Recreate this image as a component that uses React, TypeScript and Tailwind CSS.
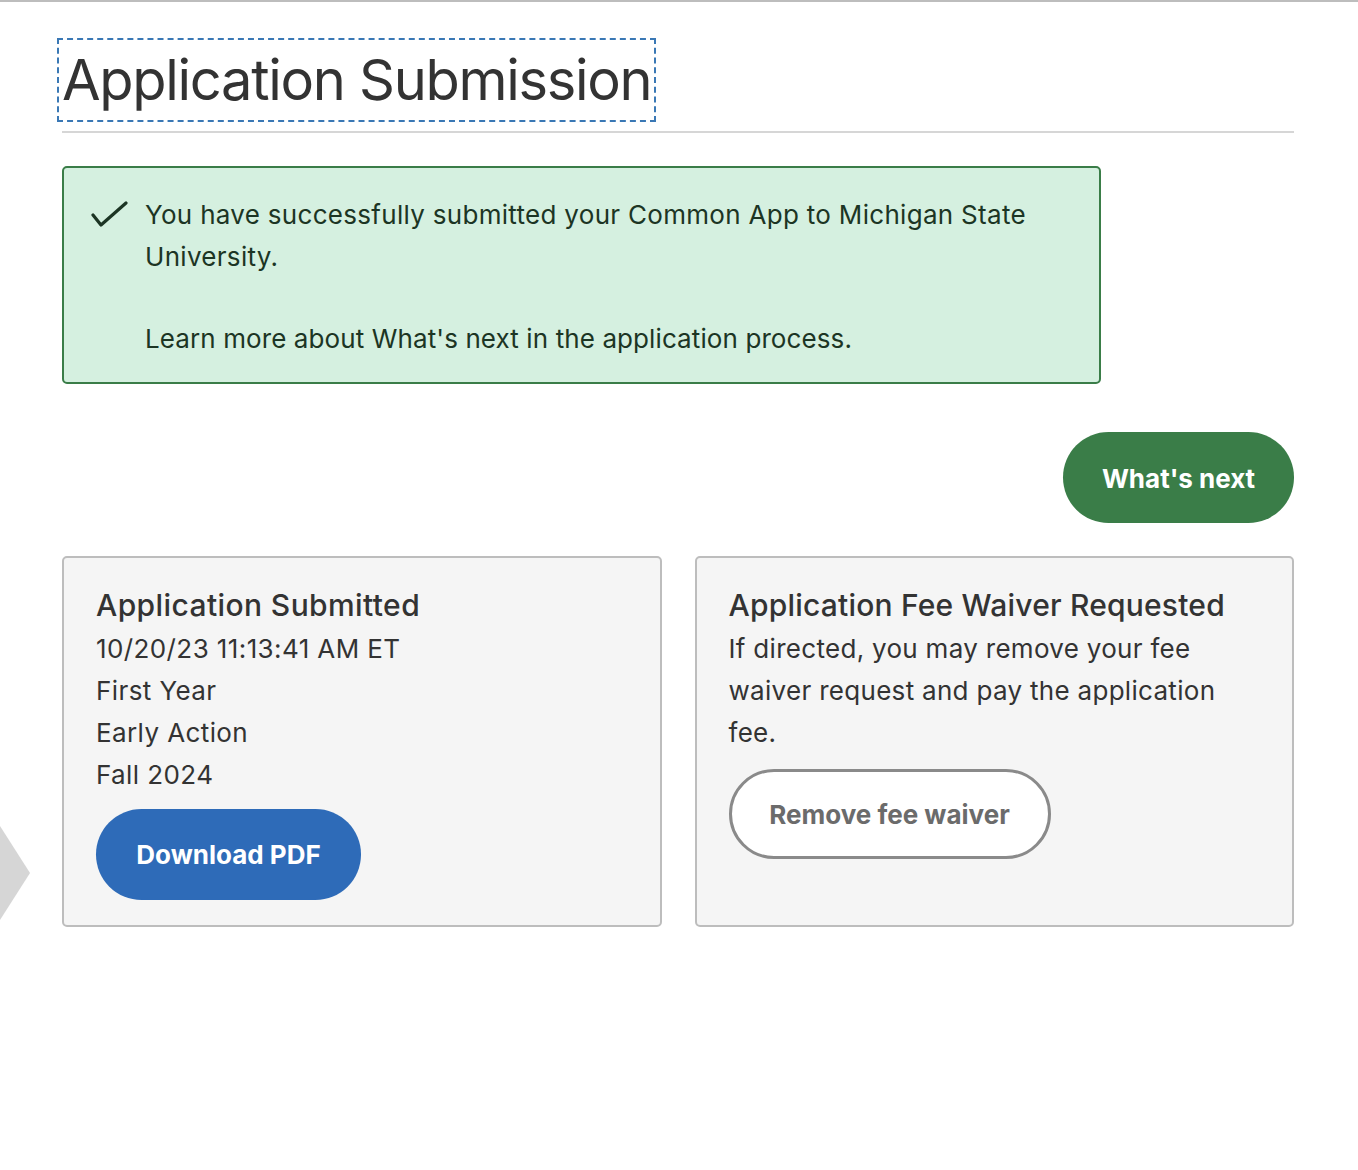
import React from "react";

export default function App() {
  const font = { fontFamily: "Inter, 'Noto Sans', sans-serif" };
  return (
    <div className="relative min-h-[1170px] w-full overflow-hidden bg-white" style={font}>
      <div className="h-[2px] w-full bg-[#bdbdbd]" />
      <svg className="absolute left-0 top-[826px]" width="32" height="96" viewBox="0 0 32 96">
        <polygon points="0,0 30,47 0,94" fill="#d6d6d6" />
      </svg>
      <div className="ml-[62px] w-[1232px]">
        <div className="mt-[41px]">
          <h1 className="inline-block text-[56px] leading-[74px] font-normal text-[#333333] tracking-[-1.3px] outline-2 outline-dashed outline-[#3a78b5] outline-offset-[3px]">
            Application Submission
          </h1>
        </div>
        <div className="mt-[14px] h-[2px] w-full bg-[#d6d6d6]" />
        <div className="mt-[33px] flex w-[1039px] gap-[17px] rounded-[5px] border-2 border-[#3a7d48] bg-[#d5f0e0] pb-[22px] pl-[26px] pr-[20px] pt-[26px] text-[#1c3524]">
          <svg className="mt-[7px] shrink-0" width="38" height="30" viewBox="0 0 38 30">
            <polyline points="3,14 11,24 36,2" fill="none" stroke="#1c3524" strokeWidth="3.2" strokeLinecap="round" strokeLinejoin="round" />
          </svg>
          <div className="text-[26px] leading-[42px] tracking-[0.3px]">
            <p>You have successfully submitted your Common App to Michigan State University.</p>
            <p className="mt-[40px] tracking-[0.1px]">Learn more about What's next in the application process.</p>
          </div>
        </div>
        <div className="mt-[48px] flex justify-end">
          <button className="h-[91px] w-[231px] rounded-full bg-[#3a7d48] pt-[2px] text-[26px] font-bold text-white">
            What's next
          </button>
        </div>
        <div className="mt-[33px] grid grid-cols-2 gap-[33px]">
          <div className="h-[371px] rounded-[5px] border-2 border-[#bdbdbd] bg-[#f5f5f5] pl-[32px] pt-[24px] text-[#333333]">
            <h2 className="text-[30px] leading-[46px] font-medium tracking-[0.4px]">Application Submitted</h2>
            <div className="text-[26px] leading-[42px] tracking-[0.4px]">
              <p>10/20/23 11:13:41 AM ET</p>
              <p>First Year</p>
              <p>Early Action</p>
              <p>Fall 2024</p>
            </div>
            <button className="mt-[13px] h-[91px] w-[265px] rounded-full bg-[#2e6bb8] text-[26px] font-bold text-white">
              Download PDF
            </button>
          </div>
          <div className="h-[371px] rounded-[5px] border-2 border-[#bdbdbd] bg-[#f5f5f5] pl-[32px] pr-[40px] pt-[24px] text-[#333333]">
            <h2 className="text-[30px] leading-[46px] font-medium tracking-[0.2px]">Application Fee Waiver Requested</h2>
            <p className="w-[500px] text-[26px] leading-[42px] tracking-[0.3px]">
              If directed, you may remove your fee waiver request and pay the application fee.
            </p>
            <button className="mt-[15px] h-[90px] w-[322px] rounded-full border-[3px] border-[#8a8a8a] bg-white text-[26px] font-bold text-[#6b6b6b]">
              Remove fee waiver
            </button>
          </div>
        </div>
      </div>
    </div>
  );
}
